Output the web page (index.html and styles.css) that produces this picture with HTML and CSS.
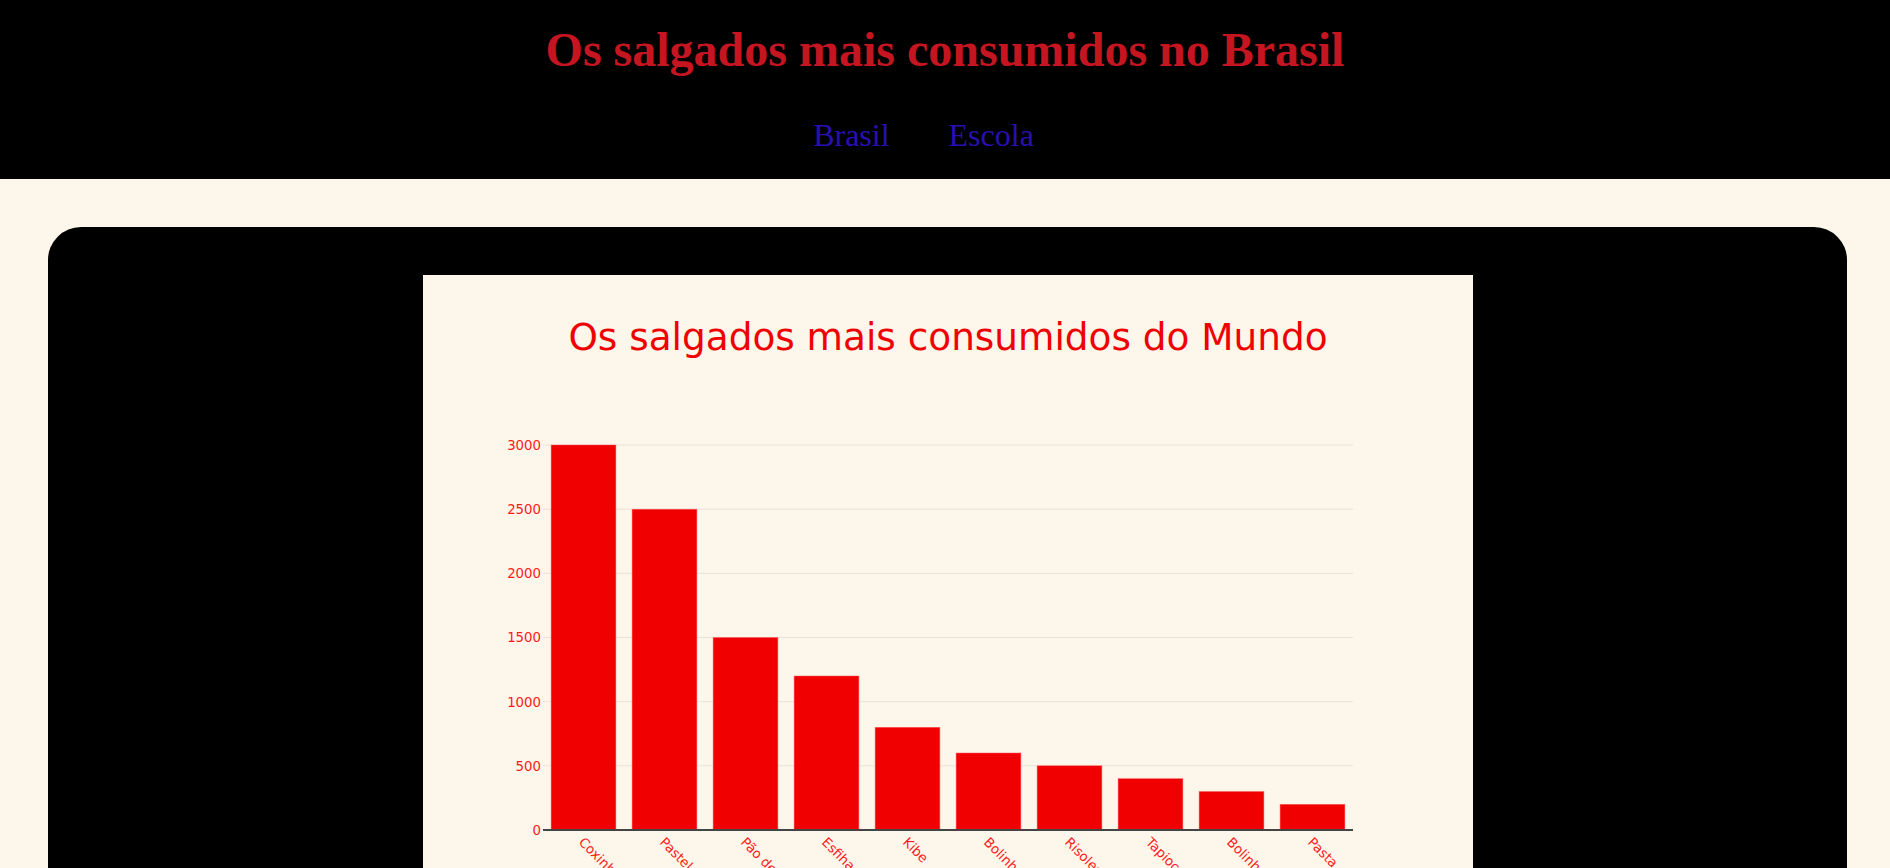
FILE: index.html
```html
<!DOCTYPE html>
<html>
<head>
  <title>Salgados</title>
  <link rel="stylesheet" href="styles.css">
</head>
<body>
  <header class="topo">
    <h1>Os salgados mais consumidos no Brasil</h1>
    <nav class="menu">
      <a href="#">Brasil</a>
      <a href="#">Escola</a>
    </nav>
  </header>

  <main class="conteudo">
    <section class="cartao">
      <!-- grafico de barras -->
      <div class="grafico">
        <svg width="1050" height="650" viewBox="0 0 1050 650">
          <text class="titulo-grafico" x="525" y="75">Os salgados mais consumidos do Mundo</text>

          <g class="grade">
            <line x1="120" x2="930" y1="490.8" y2="490.8"></line>
            <line x1="120" x2="930" y1="426.7" y2="426.7"></line>
            <line x1="120" x2="930" y1="362.5" y2="362.5"></line>
            <line x1="120" x2="930" y1="298.3" y2="298.3"></line>
            <line x1="120" x2="930" y1="234.2" y2="234.2"></line>
            <line x1="120" x2="930" y1="170" y2="170"></line>
          </g>

          <g class="eixo-y">
            <text x="118" y="559.8">0</text>
            <text x="118" y="495.6">500</text>
            <text x="118" y="431.5">1000</text>
            <text x="118" y="367.3">1500</text>
            <text x="118" y="303.1">2000</text>
            <text x="118" y="239">2500</text>
            <text x="118" y="174.8">3000</text>
          </g>

          <g class="barras">
            <rect x="128.1" y="170" width="64.8" height="385"></rect>
            <rect x="209.1" y="234.2" width="64.8" height="320.8"></rect>
            <rect x="290.1" y="362.5" width="64.8" height="192.5"></rect>
            <rect x="371.1" y="401" width="64.8" height="154"></rect>
            <rect x="452.1" y="452.3" width="64.8" height="102.7"></rect>
            <rect x="533.1" y="478" width="64.8" height="77"></rect>
            <rect x="614.1" y="490.8" width="64.8" height="64.2"></rect>
            <rect x="695.1" y="503.7" width="64.8" height="51.3"></rect>
            <rect x="776.1" y="516.5" width="64.8" height="38.5"></rect>
            <rect x="857.1" y="529.3" width="64.8" height="25.7"></rect>
          </g>

          <line class="linha-zero" x1="120" x2="930" y1="555" y2="555"></line>

          <g class="eixo-x">
            <text x="155" y="568" transform="rotate(45 155 568)">Coxinha</text>
            <text x="236" y="568" transform="rotate(45 236 568)">Pastel</text>
            <text x="317" y="568" transform="rotate(45 317 568)">Pão de queijo</text>
            <text x="398" y="568" transform="rotate(45 398 568)">Esfiha</text>
            <text x="479" y="568" transform="rotate(45 479 568)">Kibe</text>
            <text x="560" y="568" transform="rotate(45 560 568)">Bolinho de bacalhau</text>
            <text x="641" y="568" transform="rotate(45 641 568)">Risoles</text>
            <text x="722" y="568" transform="rotate(45 722 568)">Tapioca</text>
            <text x="803" y="568" transform="rotate(45 803 568)">Bolinho de chuva</text>
            <text x="884" y="568" transform="rotate(45 884 568)">Pasta</text>
          </g>
        </svg>
      </div>
    </section>
  </main>
</body>
</html>
```

FILE: styles.css
```css
body {
  margin: 0;
  background-color: #fdf6ea; /* creme */
  font-family: 'Liberation Serif', 'Times New Roman', serif;
}
.topo {
  background: #000;
  text-align: center;
  padding: 22px 0 25px;
}
.topo h1 {
  margin: 0;
  font-size: 48px;
  font-weight: bold;
  color: #c51521;
}
.menu {
  display: flex;
  justify-content: center;
  gap: 59px;
  margin-top: 40px;
  padding-right: 43px;
}
.menu a {
  font-size: 32px;
  color: #2810b0;
  text-decoration: none;
}
.conteudo {
  padding: 48px 43px 0 48px;
}
.cartao {
  background: #000;
  border-radius: 33px;
  padding: 48px;
  display: flex;
  justify-content: center;
}
.grafico {
  width: 1050px;
  background: #fdf6ea;
}
.grafico svg {
  display: block;
  font-family: 'DejaVu Sans', Verdana, sans-serif;
}
.titulo-grafico {
  font-size: 37.4px;
  fill: #f00000;
  text-anchor: middle;
}
.grade line {
  stroke: #e7e3d9;
  stroke-width: 1;
}
.linha-zero {
  stroke: #444;
  stroke-width: 2;
}
.eixo-y text {
  font-size: 13.3px;
  fill: #ff1a1a;
  text-anchor: end;
}
.eixo-x text {
  font-size: 13.3px;
  fill: #ff1a1a;
}
.barras rect {
  fill: #f00000;
  stroke: #ff5a5a;
  stroke-width: 0.5;
}
```
